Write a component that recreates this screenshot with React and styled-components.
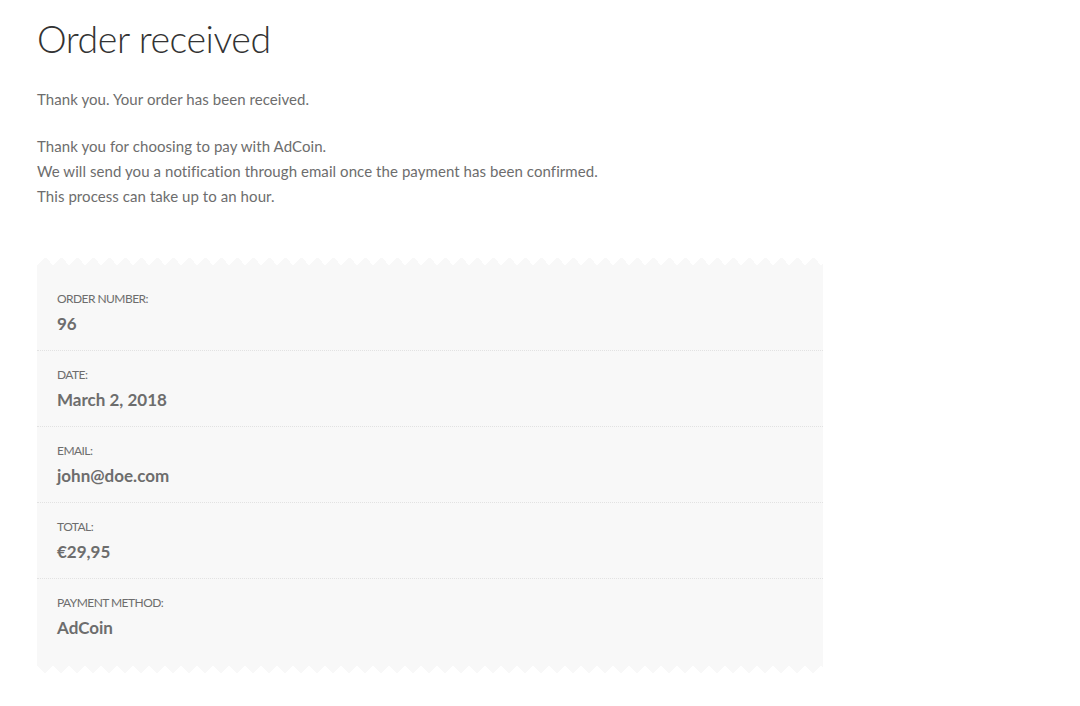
import React from "react";
import styled, { createGlobalStyle } from "styled-components";

const Global = createGlobalStyle`
  html, body { margin: 0; padding: 0; background: #ffffff; }
  body { font-family: Lato, "Noto Sans", sans-serif; color: #6d6d6d; }
`;

const Page = styled.main`
  padding: 11px 37px 30px;
  width: 786px;
`;

const Title = styled.h1`
  margin: 0 0 20px;
  font-size: 37.5px;
  line-height: 56px;
  font-weight: 300;
  color: #333333;
  letter-spacing: -0.45px;
`;

const Text = styled.p`
  margin: 0 0 ${(p) => p.$gap || 0}px;
  font-size: 15px;
  line-height: 25px;
  letter-spacing: 0.07px;
`;

const Details = styled.section`
  margin-top: 48px;
  display: flex;
  flex-direction: column;
`;

const Edge = styled.div`
  height: 8px;
  background: ${(p) =>
    p.$bottom
      ? "conic-gradient(from -45deg at 50% 100%, #f8f8f8 90deg, transparent 0) 0 0 / 16px 8px repeat-x"
      : "conic-gradient(from 135deg at 50% 0, #f8f8f8 90deg, transparent 0) 0 0 / 16px 8px repeat-x"};
`;

const List = styled.ul`
  list-style: none;
  margin: 0;
  padding: 10px 0 11px;
  background: #f8f8f8;
`;

const Item = styled.li`
  padding: 14px 20px 16px;
  border-bottom: 1px dotted #e2e2e2;
  &:last-child { border-bottom: none; }
`;

const Label = styled.div`
  font-size: 12px;
  line-height: 20px;
  text-transform: uppercase;
  letter-spacing: -0.55px;
`;

const Value = styled.strong`
  display: block;
  margin-top: 5px;
  font-size: 17px;
  line-height: 20px;
  font-weight: 700;
  color: #6d6d6d;
`;

const rows = [
  ["Order number:", "96"],
  ["Date:", "March 2, 2018"],
  ["Email:", "john@doe.com"],
  ["Total:", "€29,95"],
  ["Payment method:", "AdCoin"],
];

export default function App() {
  return (
    <>
      <Global />
      <Page>
        <Title>Order received</Title>
        <Text $gap={22}>Thank you. Your order has been received.</Text>
        <Text>Thank you for choosing to pay with AdCoin.</Text>
        <Text>We will send you a notification through email once the payment has been confirmed.</Text>
        <Text>This process can take up to an hour.</Text>
        <Details>
          <Edge />
          <List>
            {rows.map(([l, v]) => (
              <Item key={l}>
                <Label>{l}</Label>
                <Value>{v}</Value>
              </Item>
            ))}
          </List>
          <Edge $bottom />
        </Details>
      </Page>
    </>
  );
}
